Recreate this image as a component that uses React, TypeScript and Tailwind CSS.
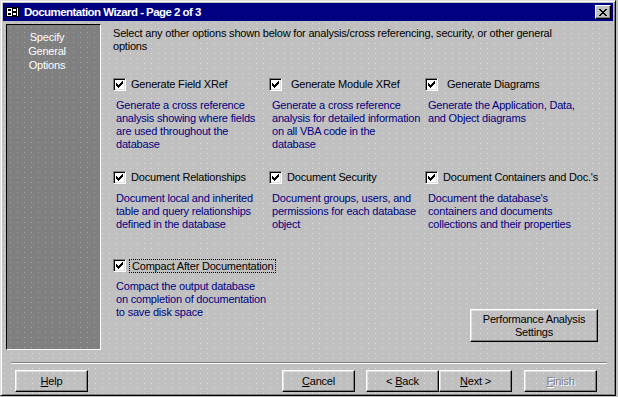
import type { ReactNode } from "react"

type Option = {
  label: string
  gap?: string
  focus?: boolean
  desc: string[]
}

const ROWS: { h: string; items: Option[] }[] = [
  {
    h: "h-[93px]",
    items: [
      {
        label: "Generate Field XRef",
        desc: ["Generate a cross reference", "analysis showing where fields", "are used throughout the", "database"],
      },
      {
        label: "Generate Module XRef",
        gap: "ml-[9px]",
        desc: ["Generate a cross reference", "analysis for detailed information", "on all VBA code in the", "database"],
      },
      {
        label: "Generate Diagrams",
        gap: "ml-[9px]",
        desc: ["Generate the Application, Data,", "and Object diagrams"],
      },
    ],
  },
  {
    h: "h-[88px]",
    items: [
      {
        label: "Document Relationships",
        desc: ["Document local and inherited", "table and query relationships", "defined in the database"],
      },
      {
        label: "Document Security",
        desc: ["Document groups, users, and", "permissions for each database", "object"],
      },
      {
        label: "Document Containers and Doc.'s",
        desc: ["Document the database's", "containers and documents", "collections and their properties"],
      },
    ],
  },
]

const COMPACT: Option = {
  label: "Compact After Documentation",
  focus: true,
  desc: ["Compact the output database", "on completion of documentation", "to save disk space"],
}

// win95 check glyph, 7x7 pixels drawn as rects
const CHECK_PIXELS = [
  [7, 1, 1], [6, 2, 2], [1, 3, 1], [5, 3, 3], [1, 4, 2], [4, 4, 3], [1, 5, 5], [2, 6, 3], [3, 7, 1],
]

const CLOSE_PIXELS = [
  [0, 0, 2], [6, 0, 2], [1, 1, 2], [5, 1, 2], [2, 2, 4], [3, 3, 2], [2, 4, 4], [1, 5, 2], [5, 5, 2], [0, 6, 2], [6, 6, 2],
]

function CheckBox() {
  return (
    <span className="relative block h-[13px] w-[13px] shrink-0 border border-t-[#808080] border-l-[#808080] border-b-white border-r-white bg-white shadow-[inset_1px_1px_0_#000,inset_-1px_-1px_0_#dfdfdf]">
      <svg className="absolute left-[1px] top-[1px]" width="9" height="9" viewBox="0 0 9 9" shapeRendering="crispEdges">
        {CHECK_PIXELS.map(([x, y, w], i) => (
          <rect key={i} x={x} y={y} width={w} height={1} fill="#000" />
        ))}
      </svg>
    </span>
  )
}

function OptionCell({ o }: { o: Option }) {
  return (
    <div>
      <div className="flex h-[13px] items-center">
        <CheckBox />
        {o.focus ? (
          <span className="ml-[3px] whitespace-nowrap border border-dotted border-black px-[2px] leading-[12px] text-black">
            {o.label}
          </span>
        ) : (
          <span className={`${o.gap ?? "ml-[5px]"} whitespace-nowrap text-black`}>{o.label}</span>
        )}
      </div>
      <div className="mt-[8px] pl-[3px] whitespace-nowrap text-[#000080]">
        {o.desc.map((l) => (
          <div key={l}>{l}</div>
        ))}
      </div>
    </div>
  )
}

function Btn({ children, className, disabled }: { children: ReactNode; className?: string; disabled?: boolean }) {
  return (
    <div
      className={`flex h-[22px] w-[73px] shrink-0 items-center justify-center border border-t-white border-l-white border-b-black border-r-black shadow-[inset_-1px_-1px_0_#808080,inset_1px_1px_0_#dfdfdf] ${
        disabled ? "text-[#808080] [text-shadow:1px_1px_0_#fff]" : "text-black"
      } ${className ?? ""}`}
    >
      {children}
    </div>
  )
}

export default function App() {
  return (
    <div className="h-[397px] w-[618px] overflow-hidden bg-[#c0c0c0] font-['Liberation_Sans',Arial,sans-serif] text-[11px] leading-[13px] tracking-[-0.2px]">
      <div className="flex h-[396px] w-[616px] flex-col border border-t-[#dfdfdf] border-l-[#dfdfdf] border-b-black border-r-black bg-[radial-gradient(circle,rgba(255,255,255,0.45)_0.6px,transparent_0.9px)] bg-[length:7px_5px] p-[2px] shadow-[inset_1px_1px_0_#fff,inset_-1px_-1px_0_#808080]">
        {/* Title bar */}
        <div className="flex h-[18px] shrink-0 items-center bg-[#000080] pl-[3px] pr-[2px]">
          <svg width="13" height="10" viewBox="0 0 13 10" shapeRendering="crispEdges" className="shrink-0">
            <rect x="0.5" y="0.5" width="12" height="9" fill="#fff" stroke="#000" />
            <rect x="2" y="2" width="3" height="2" fill="#000" />
            <rect x="2" y="6" width="3" height="2" fill="#000" />
            <rect x="6.5" y="1.5" width="4" height="3" fill="none" stroke="#000" />
            <rect x="6.5" y="5.5" width="4" height="3" fill="none" stroke="#000" />
          </svg>
          <span className="ml-[5px] text-[11.5px] font-bold tracking-[-0.55px] text-white">
            Documentation Wizard - Page 2 of 3
          </span>
          <div className="ml-auto flex h-[14px] w-[16px] items-center justify-center border border-t-white border-l-white border-b-black border-r-black bg-[#c0c0c0] shadow-[inset_-1px_-1px_0_#808080]">
            <svg width="8" height="7" viewBox="0 0 8 7" shapeRendering="crispEdges">
              {CLOSE_PIXELS.map(([x, y, w], i) => (
                <rect key={i} x={x} y={y} width={w} height={1} fill="#000" />
              ))}
            </svg>
          </div>
        </div>

        {/* Body */}
        <div className="mt-[3px] flex h-[326px] shrink-0">
          <div className="ml-[3px] h-full w-[95px] shrink-0 border border-t-black border-l-black border-b-white border-r-white bg-[#808080] bg-[radial-gradient(circle,rgba(255,255,255,0.28)_0.6px,transparent_0.9px)] bg-[length:7px_5px] pt-[5px]">
            <div className="w-[80px] text-center leading-[14px] text-white">
              <div>Specify</div>
              <div>General</div>
              <div>Options</div>
            </div>
          </div>

          <div className="flex-1 pl-[12px] pt-[3px]">
            <p className="text-black">
              Select any other options shown below for analysis/cross referencing, security, or other general
              <br />
              options
            </p>

            <div className="mt-[25px]">
              {ROWS.map((r, ri) => (
                <div key={ri} className={`grid grid-cols-[156px_156px_1fr] ${r.h}`}>
                  {r.items.map((o) => (
                    <OptionCell key={o.label} o={o} />
                  ))}
                </div>
              ))}
              <div className="grid grid-cols-[312px_1fr]">
                <OptionCell o={COMPACT} />
                <div className="pl-[45px] pt-[50px]">
                  <div className="flex h-[33px] w-[128px] flex-col items-center justify-center border border-t-white border-l-white border-b-black border-r-black shadow-[inset_-1px_-1px_0_#808080,inset_1px_1px_0_#dfdfdf] text-center text-black">
                    <span>Performance Analysis</span>
                    <span>Settings</span>
                  </div>
                </div>
              </div>
            </div>
          </div>
        </div>

        {/* Separator */}
        <div className="ml-[8px] mt-[12px] h-[2px] w-[596px] shrink-0 border-t border-b border-t-[#808080] border-b-white" />

        {/* Buttons */}
        <div className="mt-[6px] flex pl-[12px] pr-[16px]">
          <Btn>
            <span>
              <span className="underline">H</span>elp
            </span>
          </Btn>
          <Btn className="ml-auto">
            <span>
              <span className="underline">C</span>ancel
            </span>
          </Btn>
          <Btn className="ml-[11px]">
            <span>
              &lt; <span className="underline">B</span>ack
            </span>
          </Btn>
          <Btn>
            <span>
              <span className="underline">N</span>ext &gt;
            </span>
          </Btn>
          <Btn className="ml-[12px]" disabled>
            <span>
              <span className="underline">F</span>inish
            </span>
          </Btn>
        </div>
      </div>
    </div>
  )
}
